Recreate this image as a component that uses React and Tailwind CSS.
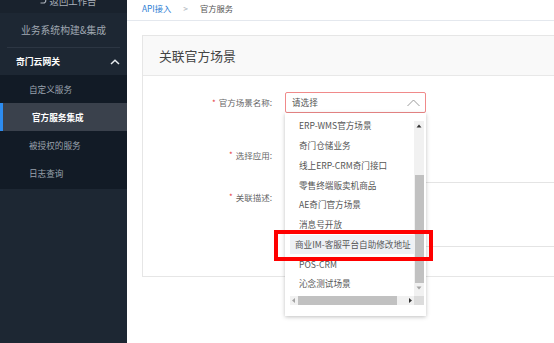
import { useState } from 'react'

const SUB_MENU = ['自定义服务', '官方服务集成', '被授权的服务', '日志查询']
const SCENES = [
  'ERP-WMS官方场景',
  '奇门仓储业务',
  '线上ERP-CRM奇门接口',
  '零售终端贩卖机商品',
  'AE奇门官方场景',
  '消息号开放',
  '商业IM-客服平台自助修改地址',
  'POS-CRM',
  '沁念测试场景',
]

function Label({ children, className = '' }) {
  return (
    <div className={`w-[142px] shrink-0 flex items-center justify-end gap-[3px] pr-[13px] text-[8.5px] text-[#666] ${className}`}>
      <span className="text-[#e4393c] text-[8px]">*</span>
      <span>{children}</span>
    </div>
  )
}

function Dropdown({ hovered }) {
  return (
    <div className="absolute left-0 top-[21px] w-[141px] h-[203px] bg-white shadow-[0_1px_4px_rgba(0,0,0,0.25)] pt-[3px] pl-[5px] pr-[2px] z-10">
      <div className="grid grid-cols-[1fr_10px] grid-rows-[180px_9px]">
        {/* list */}
        <div className="overflow-hidden">
          {SCENES.map((s, i) => (
            <div key={s}
              className={`h-[19.75px] flex items-center whitespace-nowrap text-[8.6px] text-[#555] ${
                i === hovered ? 'bg-[#eef1f5] pl-[5px]' : 'pl-[9px]'
              }`}>
              {s}
            </div>
          ))}
        </div>

        {/* vertical scrollbar */}
        <div className="mt-[5px] bg-[#f1f1f1] flex flex-col items-center">
          <svg width="10" height="10" viewBox="0 0 10 10" className="shrink-0">
            <path d="M2.5 6.5 L5 3.5 L7.5 6.5 Z" fill="#333" />
          </svg>
          <div className="mt-[44px] w-[9px] h-[108px] bg-[#c1c1c1]" />
          <svg width="10" height="10" viewBox="0 0 10 10" className="shrink-0">
            <path d="M2.5 3.5 L5 6.5 L7.5 3.5 Z" fill="#a3a3a3" />
          </svg>
        </div>

        {/* horizontal scrollbar */}
        <div className="bg-[#f1f1f1] flex items-center">
          <svg width="8" height="9" viewBox="0 0 8 9" className="shrink-0">
            <path d="M5 2 L2 4.5 L5 7 Z" fill="#a3a3a3" />
          </svg>
          <div className="h-[9px] w-[99px] bg-[#c1c1c1]" />
          <div className="flex-1" />
          <svg width="8" height="9" viewBox="0 0 8 9" className="shrink-0">
            <path d="M3 2 L6 4.5 L3 7 Z" fill="#333" />
          </svg>
        </div>
        <div className="bg-[#dcdcdc]" />
      </div>
    </div>
  )
}

export default function App() {
  const [active] = useState(1)

  return (
    <div className="relative w-[554px] h-[343px] flex overflow-hidden bg-white font-['Noto_Sans_CJK_SC',sans-serif]">
      {/* Sidebar */}
      <div className="w-[127px] shrink-0 bg-[#1d2733] flex flex-col">
        <div className="h-[13px] bg-[#19222d] overflow-hidden flex justify-center">
          <div className="-mt-[8px] h-[18px] flex items-center gap-[3px] text-[9.4px] text-[#a9b0b9] pl-[8px]">
            <svg width="8" height="8" viewBox="0 0 8 8" fill="none" stroke="#a9b0b9" strokeWidth="1.2">
              <path d="M1.5 1.5 H4.5 A2.2 2.2 0 0 1 4.5 6 H1.5" />
              <path d="M3 0.3 L1.5 1.5 L3 2.7" />
            </svg>
            返回工作台
          </div>
        </div>
        <div className="h-[34px] flex items-center justify-center text-[9.8px] text-[#a0a8b2]">
          业务系统构建&amp;集成
        </div>
        <div className="mx-[7px] h-px bg-[#2c3643]" />
        <div className="h-[27px] flex items-center justify-between pl-[16px] pr-[7px] text-[8.8px] font-bold text-white">
          <span>奇门云网关</span>
          <svg width="10" height="6" viewBox="0 0 10 6" fill="none" stroke="#e8ecf0" strokeWidth="1.5">
            <path d="M1 5 L5 1.2 L9 5" />
          </svg>
        </div>
        <div className="bg-[#121b26] pb-[2px]">
          {SUB_MENU.map((m, i) => (
            <div key={m}
              className={`h-[28px] flex items-center pl-[29px] text-[8.6px] ${
                i === active
                  ? 'bg-[#3a414c] text-white font-bold border-l-[3px] border-[#2d8cf0] pl-[26px]'
                  : 'text-[#9aa2ad]'
              }`}>
              {m}
            </div>
          ))}
        </div>
      </div>

      {/* Main */}
      <div className="flex-1 overflow-hidden">
        <div className="h-[21px] border-b border-[#e4e8ee] flex items-start pt-[2px] pl-[15px] gap-[12px] text-[8.3px]">
          <span className="text-[#2b7cd3]">API接入</span>
          <span className="text-[#b0b6be]">&gt;</span>
          <span className="text-[#555]">官方服务</span>
        </div>

        <div className="ml-[15px] mt-[14px] w-[480px] border border-[#e6e6e6]">
          <div className="h-[40px] bg-[#f9f9f9] border-b border-[#e8e8e8] flex items-center pl-[16px] text-[12.8px] text-[#444]">
            关联官方场景
          </div>

          <div className="pt-[16px] pb-[29px]">
            {/* row 1 */}
            <div className="flex items-center h-[21px]">
              <Label>官方场景名称:</Label>
              <div className="relative">
                <div className="w-[141px] h-[21px] border border-[#f08a8a] rounded-[2px] flex items-center justify-between pl-[6px] pr-[5px] text-[8.6px] text-[#555]">
                  <span>请选择</span>
                  <svg width="13" height="8" viewBox="0 0 13 8" fill="none" stroke="#9a9a9a" strokeWidth="1">
                    <path d="M0.5 7 L6.5 1 L12.5 7" />
                  </svg>
                </div>
                <Dropdown hovered={6} />
              </div>
            </div>

            {/* row 2 */}
            <div className="flex items-center h-[21px] mt-[30px]">
              <Label className="pt-[3px]">选择应用:</Label>
              <div className="w-[141px] h-[21px] border border-[#d9d9d9] rounded-[2px]" />
            </div>

            {/* row 3 */}
            <div className="flex items-start mt-[18px]">
              <Label className="pt-[9px]">关联描述:</Label>
              <div className="flex-1 h-[65px] border border-[#e4e4e4] rounded-[2px]" />
            </div>
          </div>
        </div>
      </div>

      {/* annotation */}
      <div className="absolute left-[274px] top-[230px] w-[159px] h-[31px] border-[4px] border-[#ff0000] pointer-events-none z-20" />
    </div>
  )
}
